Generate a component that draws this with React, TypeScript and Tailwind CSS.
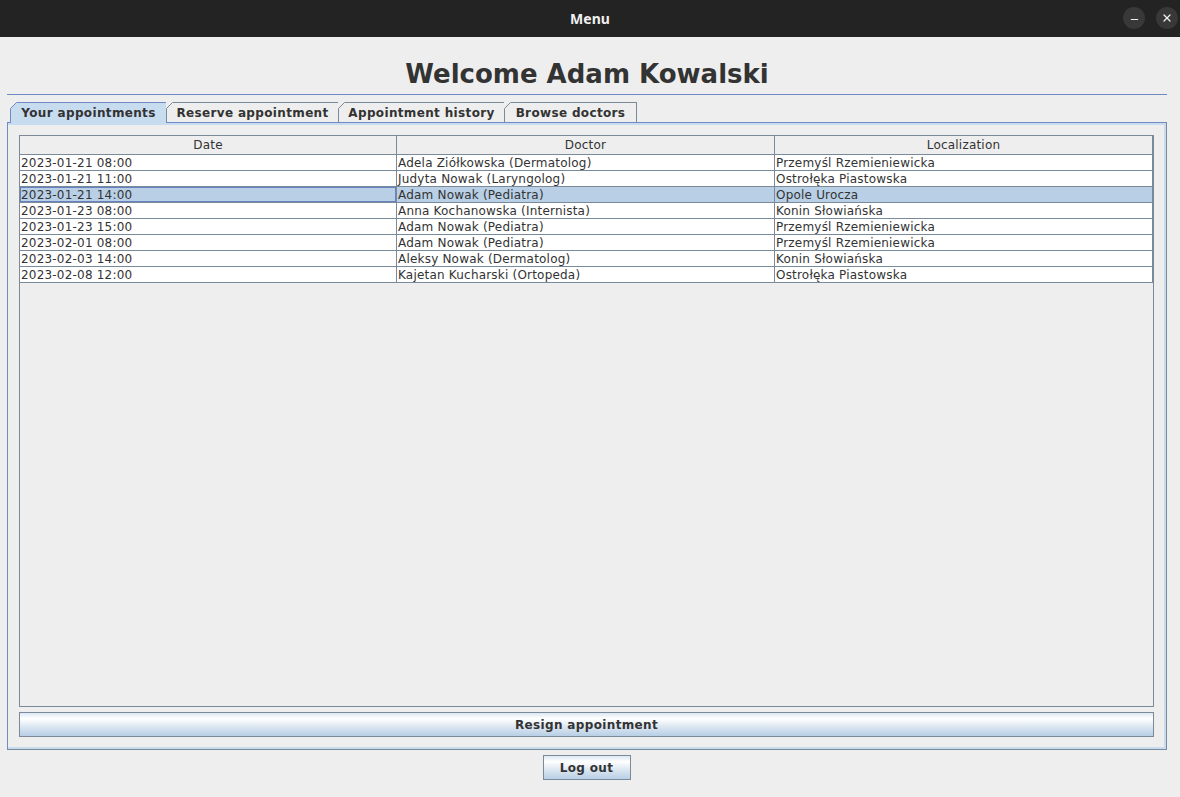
import { X, Minus } from "lucide-react";

const rows = [
  ["2023-01-21 08:00", "Adela Ziółkowska (Dermatolog)", "Przemyśl Rzemieniewicka"],
  ["2023-01-21 11:00", "Judyta Nowak (Laryngolog)", "Ostrołęka Piastowska"],
  ["2023-01-21 14:00", "Adam Nowak (Pediatra)", "Opole Urocza"],
  ["2023-01-23 08:00", "Anna Kochanowska (Internista)", "Konin Słowiańska"],
  ["2023-01-23 15:00", "Adam Nowak (Pediatra)", "Przemyśl Rzemieniewicka"],
  ["2023-02-01 08:00", "Adam Nowak (Pediatra)", "Przemyśl Rzemieniewicka"],
  ["2023-02-03 14:00", "Aleksy Nowak (Dermatolog)", "Konin Słowiańska"],
  ["2023-02-08 12:00", "Kajetan Kucharski (Ortopeda)", "Ostrołęka Piastowska"],
];

const tabs = [
  { label: "Your appointments", w: "w-[157px]", active: true },
  { label: "Reserve appointment", w: "w-[173px]", active: false },
  { label: "Appointment history", w: "w-[167px]", active: false },
  { label: "Browse doctors", w: "w-[133px]", active: false },
];

const selectedRow = 2;

function Tab({ label, w, active }: { label: string; w: string; active: boolean }) {
  return (
    <div
      className={`relative -mr-px flex h-[20px] items-center justify-center border border-b-0 text-[12px] font-bold tracking-[0.35px] text-[#333333] ${w} ${
        active ? "h-[21px] border-[#6f8ac4] bg-[#c8dcf0]" : "border-[#7a8a99] bg-[#eeeeee]"
      }`}
    >
      <svg className="absolute -left-px -top-px" width="7" height="7" viewBox="0 0 7 7">
        <polygon points="0,0 7,0 0,7" fill="#eeeeee" />
        <line x1="0.5" y1="6.5" x2="6.5" y2="0.5" stroke={active ? "#6f8ac4" : "#7a8a99"} strokeWidth="1" />
      </svg>
      {label}
    </div>
  );
}

function SwingButton({ children, className }: { children: React.ReactNode; className: string }) {
  return (
    <div
      className={`flex items-center justify-center border border-[#7a8a99] bg-[linear-gradient(to_bottom,#dde8f3_0%,#ffffff_25%,#dbe6f1_60%,#b8cfe5_100%)] text-[12px] font-bold tracking-[0.35px] text-[#333333] ${className}`}
    >
      {children}
    </div>
  );
}

export default function App() {
  return (
    <div className="flex h-[797px] w-[1180px] flex-col overflow-hidden bg-[#eeeeee] font-['DejaVu_Sans',sans-serif]">
      {/* window title bar */}
      <div className="relative flex h-[37px] shrink-0 items-center justify-center bg-[#232323]">
        <span className="font-['Noto_Sans',sans-serif] text-[14px] font-bold text-[#f0f0f0]">Menu</span>
        <div className="absolute right-[2px] top-[7px] flex gap-[11px]">
          <div className="flex h-[22px] w-[22px] items-center justify-center rounded-full bg-[#383838]">
            <Minus size={11} strokeWidth={2.5} className="mt-[3px] text-[#f0f0f0]" />
          </div>
          <div className="flex h-[22px] w-[22px] items-center justify-center rounded-full bg-[#383838]">
            <X size={12} strokeWidth={2.5} className="text-[#f0f0f0]" />
          </div>
        </div>
      </div>

      {/* heading */}
      <div className="ml-[7px] mr-[13px] flex h-[58px] items-end justify-center border-b border-[#6f8ac4] pb-[5px]">
        <h1 className="text-[26px] font-bold leading-[30px] text-[#333333]">Welcome Adam Kowalski</h1>
      </div>

      {/* tabs */}
      <div className="mt-[7px] flex pl-[10px]">
        {tabs.map((t) => (
          <Tab key={t.label} {...t} />
        ))}
      </div>

      {/* tab content */}
      <div className="-mt-px ml-[7px] mr-[13px] flex h-[628px] flex-col border border-[#6f8ac4] border-b-[#7a8a99] border-r-[#7a8a99] pb-[12px] pl-[11px] pr-[12px] pt-[12px] shadow-[inset_0_2px_0_#c8dcf0,inset_-2px_-2px_0_#c8dcf0]">
        <div className="flex flex-1 flex-col border border-[#7a8a99] bg-[#eeeeee]">
          <div className="grid grid-cols-[377px_378px_378px] text-[12px] tracking-[0.2px] text-[#333333]">
            {["Date", "Doctor", "Localization"].map((h) => (
              <div
                key={h}
                className="flex h-[19px] items-center justify-center border-b border-r border-[#7a8a99] bg-[#eeeeee] leading-none"
              >
                {h}
              </div>
            ))}
            {rows.map((r, i) =>
              r.map((c, j) => (
                <div
                  key={`${i}-${j}`}
                  className={`relative flex h-[16px] items-center whitespace-nowrap border-b border-r border-[#7a8a99] pl-[1px] leading-none ${
                    i === selectedRow ? "bg-[#b8cfe5]" : "bg-white"
                  }`}
                >
                  {i === selectedRow && j === 0 && (
                    <div className="pointer-events-none absolute inset-0 border border-[#6382bf]" />
                  )}
                  {c}
                </div>
              ))
            )}
          </div>
        </div>
        <SwingButton className="mt-[5px] h-[25px]">Resign appointment</SwingButton>
      </div>

      {/* log out */}
      <div className="mt-[5px] flex justify-center pr-[7px]">
        <SwingButton className="h-[25px] w-[88px]">Log out</SwingButton>
      </div>
    </div>
  );
}
